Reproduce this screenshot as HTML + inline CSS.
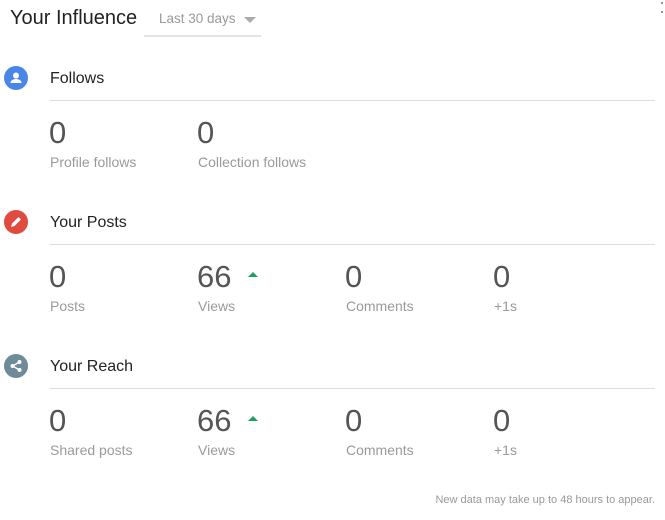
<!DOCTYPE html>
<html><head><meta charset="utf-8"><style>
body{margin:0;width:665px;height:520px;background:#fff;font-family:"Liberation Sans",sans-serif;position:relative;overflow:hidden}
.a{position:absolute;white-space:nowrap}
.title{left:10px;top:7px;font-size:20px;color:#222}
.dd{left:144px;top:0;width:117px;height:35px;border-bottom:2px solid #e4e4e4}
.dd span{position:absolute;left:15px;top:11px;font-size:13.5px;color:#999}
.caret{position:absolute;left:100px;top:17px;width:0;height:0;border-left:6px solid transparent;border-right:6px solid transparent;border-top:6px solid #aaa}
.ic{position:absolute;left:4px;width:24px;height:24px;border-radius:50%}
.h{left:50px;font-size:16px;color:#222}
.line{position:absolute;left:50px;width:605px;height:1px;background:#ddd}
.n{font-size:31px;color:#555;font-weight:300}
.l{font-size:14px;color:#9a9a9a}
.up{position:absolute;width:0;height:0;border-left:5px solid transparent;border-right:5px solid transparent;border-top:0;border-bottom:5px solid #1e9e63}
</style></head><body>
<div class="a title">Your Influence</div>
<div class="a dd"><span>Last 30 days</span><div class="caret"></div></div>
<div class="a" style="left:661px;top:2px;width:2px;height:2px;background:#999"></div>
<div class="a" style="left:661px;top:11px;width:2px;height:2px;background:#999"></div>

<div class="ic" style="top:66px;background:#4a86e8"><svg width="24" height="24"><circle cx="12" cy="9.5" r="3" fill="#fff"/><path d="M6.5 17c0-3 3.5-4 5.5-4s5.5 1 5.5 4z" fill="#fff"/></svg></div>
<div class="a h" style="top:70px">Follows</div>
<div class="line" style="top:100px"></div>
<div class="a n" style="left:49px;top:115px">0</div>
<div class="a n" style="left:197px;top:115px">0</div>
<div class="a l" style="left:50px;top:154px">Profile follows</div>
<div class="a l" style="left:198px;top:154px">Collection follows</div>

<div class="ic" style="top:210px;background:#e04a3f"><svg width="24" height="24"><path d="M7 17l1-3.5 6.5-6.5 2.5 2.5-6.5 6.5z" fill="#fff"/></svg></div>
<div class="a h" style="top:214px">Your Posts</div>
<div class="line" style="top:244px"></div>
<div class="a n" style="left:49px;top:259px">0</div>
<div class="a n" style="left:197px;top:259px">66</div>
<div class="up" style="left:248px;top:272px"></div>
<div class="a n" style="left:345px;top:259px">0</div>
<div class="a n" style="left:493px;top:259px">0</div>
<div class="a l" style="left:50px;top:298px">Posts</div>
<div class="a l" style="left:198px;top:298px">Views</div>
<div class="a l" style="left:346px;top:298px">Comments</div>
<div class="a l" style="left:494px;top:298px">+1s</div>

<div class="ic" style="top:354px;background:#6f8a99"><svg width="24" height="24"><circle cx="15.5" cy="8" r="2" fill="#fff"/><circle cx="8.5" cy="12" r="2" fill="#fff"/><circle cx="15.5" cy="16" r="2" fill="#fff"/><path d="M15.5 8L8.5 12L15.5 16" stroke="#fff" stroke-width="1.3" fill="none"/></svg></div>
<div class="a h" style="top:358px">Your Reach</div>
<div class="line" style="top:388px"></div>
<div class="a n" style="left:49px;top:403px">0</div>
<div class="a n" style="left:197px;top:403px">66</div>
<div class="up" style="left:248px;top:416px"></div>
<div class="a n" style="left:345px;top:403px">0</div>
<div class="a n" style="left:493px;top:403px">0</div>
<div class="a l" style="left:50px;top:442px">Shared posts</div>
<div class="a l" style="left:198px;top:442px">Views</div>
<div class="a l" style="left:346px;top:442px">Comments</div>
<div class="a l" style="left:494px;top:442px">+1s</div>

<div class="a" style="right:10px;top:494px;font-size:11px;color:#999">New data may take up to 48 hours to appear.</div>
</body></html>
